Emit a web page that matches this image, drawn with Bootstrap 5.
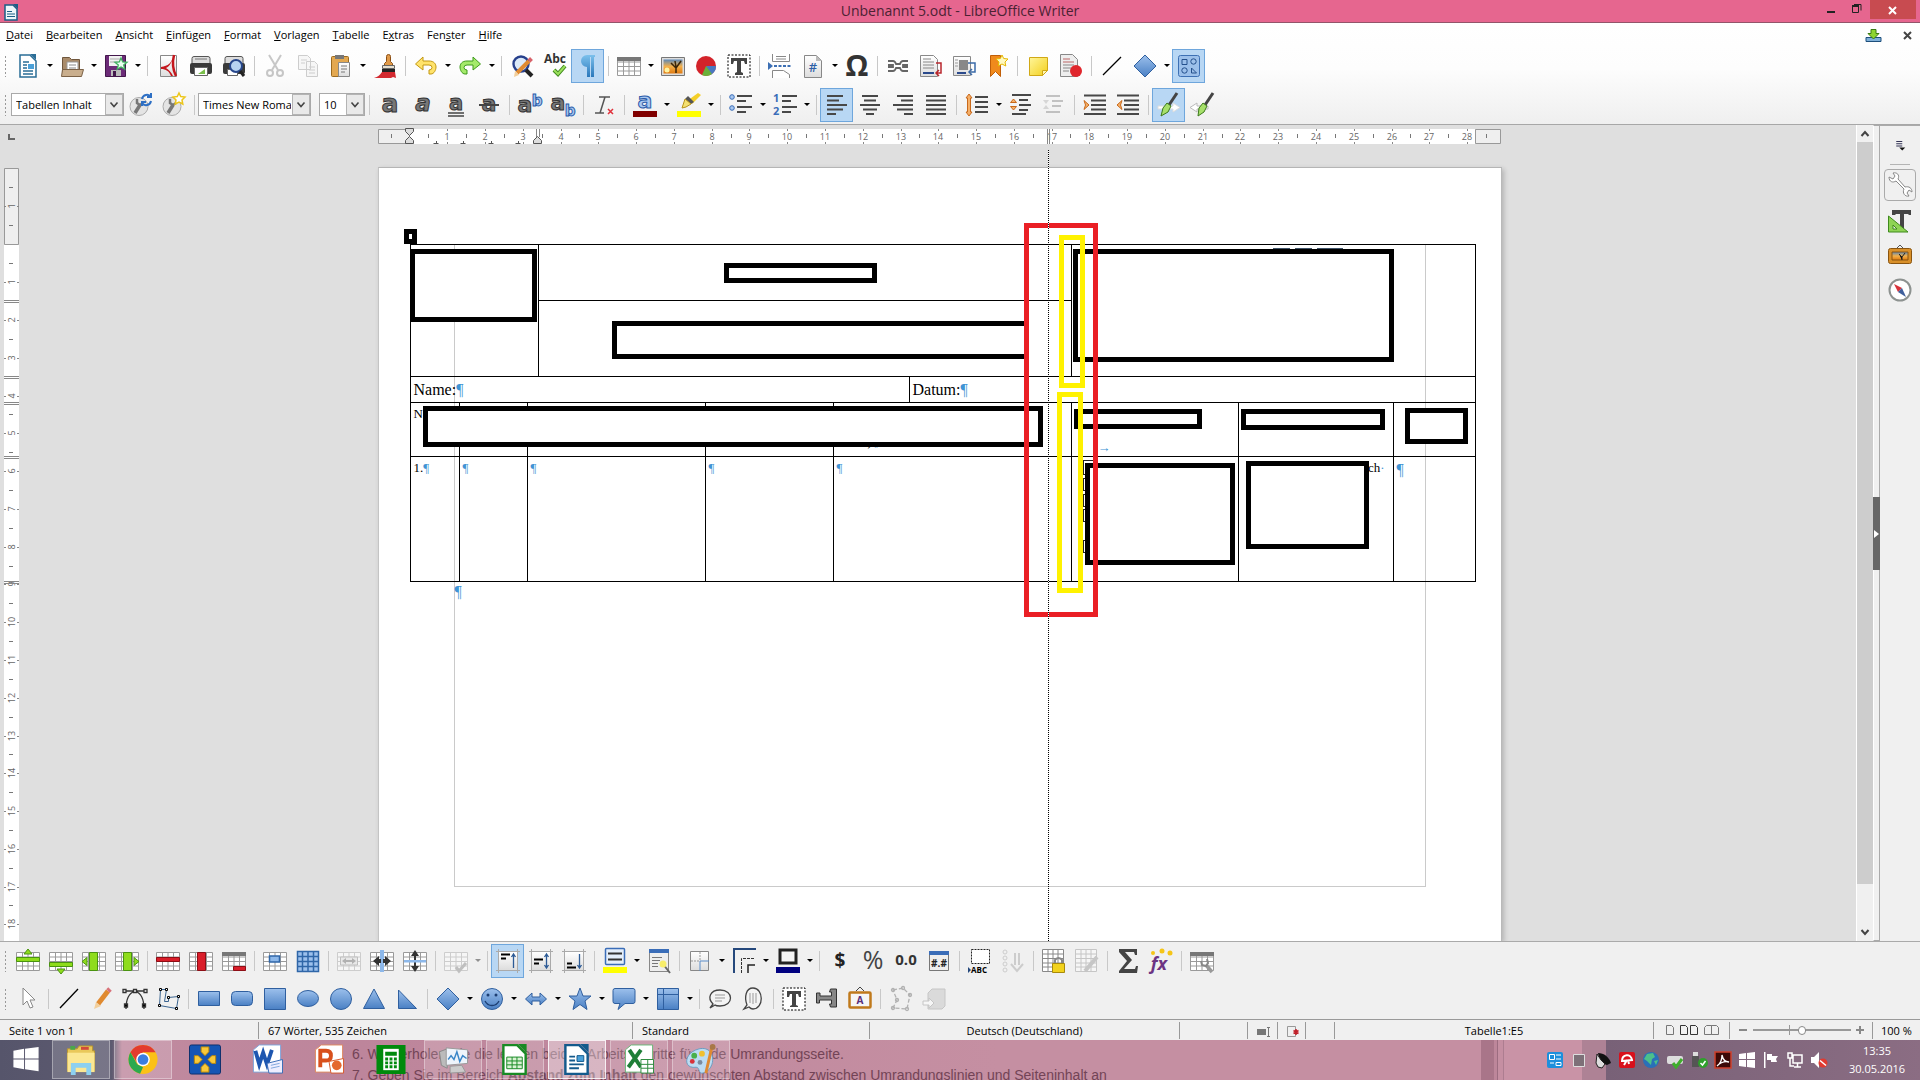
<!DOCTYPE html>
<html lang="de">
<head>
<meta charset="utf-8">
<meta name="viewport" content="width=device-width, initial-scale=1">
<title>Unbenannt 5.odt - LibreOffice Writer</title>
<link href="https://cdn.jsdelivr.net/npm/bootstrap@5.3.0/dist/css/bootstrap.min.css" rel="stylesheet">
<style>
:root{--ui:"Open Sans","Noto Sans",sans-serif}
body{font:11px/16px var(--ui);color:#000;background:#dfdfdf;overflow:hidden}
button,select{font:inherit;color:inherit}
button{background:none;border:0;padding:0}
.titlebar{height:23px;background:#e6668f;border-bottom:1px solid #93556a;color:#4b2233}
.titlebar h1{font-size:14px;line-height:22px}
.win-b{width:26px;height:19px}
.win-x{width:46px;height:19px;background:#c84b50}
.chrome-top{height:102px;background:linear-gradient(#fff 0,#fdfdfd 45%,#efefef 100%);border-bottom:1px solid #a7a7a7}
.menubar{height:23px;padding-left:6px;gap:13px}
.menubar a{color:#000;text-decoration:none}
.menubar u{text-underline-offset:1px}
.toolrow{height:39px;padding-left:4px}
.grip{width:7px;height:22px;background:radial-gradient(circle,#999 1px,transparent 1px) 0 0/3px 4px;background-repeat:repeat-y;flex:none}
.tb{width:33px;height:34px;flex:none;display:flex;align-items:center;justify-content:center;border:1px solid transparent}
.tb.on{background:#b8d7f4;border-color:#6ea6dc}
.tb svg{width:24px;height:26px;overflow:visible}
.tb.off{opacity:.4}
.dd{width:11px;height:34px;flex:none;display:flex;align-items:center;justify-content:center}
.dd::after{content:"";border:3px solid transparent;border-top-color:#000;border-bottom:0}
.dd.off{opacity:.4}
.vr-t{width:8px;height:20px;flex:none;background:linear-gradient(#c8c8c8,#c8c8c8) center/1px 100% no-repeat}
.combo{appearance:none;height:23px;border:1px solid #a9a9a9;border-radius:0;padding:0 19px 0 4px;background:#fff url("data:image/svg+xml,%3Csvg xmlns='http://www.w3.org/2000/svg' width='18' height='21'%3E%3Crect x='.5' y='.5' width='17' height='20' fill='%23e9e9e9' stroke='%23b4b4b4'/%3E%3Cpath d='M5.500 8.500 9 12.500 12.500 8.500' fill='none' stroke='%23444' stroke-width='1.600'/%3E%3C/svg%3E") right center no-repeat;flex:none;overflow:hidden}
.w-style{width:113px}.w-font{width:113px}.w-size{width:46px}
.work{min-height:0}
.leftcol{width:23px;flex:none}
.sheet-w{width:1124px;margin:0 auto;flex:none}
.hr-row{height:42px}
.sheet{background:#fff;position:relative;height:100%;border-top:1px solid #b5b5b5;border-left:1px solid #c4c4c4;border-right:1px solid #b9b9b9;box-shadow:2px 2px 5px rgba(0,0,0,.2)}
.frame-guide{position:absolute;left:75px;top:76px;width:972px;height:643px;border:1px solid #cacaca;border-top:0}
.doc{position:relative;table-layout:fixed;width:1066px;margin:76px 0 0 31px;border-collapse:collapse;font-family:"Liberation Serif",serif;font-size:13px;line-height:15px}
.doc td{border:1px solid #000;padding:3px;vertical-align:top;overflow:hidden}
.doc .head-c{font-size:16px;line-height:19px}
.pil{color:#3f94d4}
.pil-end{font:16px/19px "Liberation Serif",serif;padding-left:76px}
.r1{height:56px}.r2{height:76px}.r3{height:26px}.r4{height:54px}.r5{height:125px}
.doc .low{padding:31px 3px 0}
.doc .tabm{padding:37px 0 0 26px}
.hide-box{position:absolute;border:5px solid #000;background:#fff}
.open-r{border-right:0}
.red-box{position:absolute;border:5px solid #ea1f25}
.yel-box{position:absolute;border:5px solid #fff200}
.logo-bit{position:absolute;background:#3d5166}
.tick{position:absolute;border:1px solid #222}
.drag-line{position:absolute;left:669px;top:-18px;bottom:0;width:1px;background:repeating-linear-gradient(#000 0 1px,#fff 1px 2px)}
.sbar{width:17px;flex:none;background:#f0f0f0;border-left:1px solid #fff}
.sb-thumb{background:#cdcdcd;flex:742 0 0}
.sb-rest{flex:40 0 0}
.splitter{width:7px;flex:none;background:#f0f0f0;border:1px solid #aaa;border-left-color:#fff;position:relative}
.split-h{position:absolute;left:-1px;top:371px;width:7px;height:73px;background:#666}
.sidebar-r{width:40px;flex:none;background:#f0f0f0;border-top:1px solid #aaa}
.sidebar-r .tb{height:34px}
.sidebar-r .tb.small-ic svg{width:18px;height:20px}
.sidebar-r .tb.sel{border:1px solid #aaa;border-radius:4px;height:32px;width:32px}
.chrome-bot{height:78px;background:#f0f0f0;border-top:1px solid #aaa}
.chrome-bot .toolrow:first-child{height:37px}
.status{height:21px;background:#f0f0f0;border-top:1px solid #999}
.status>div{height:17px;border-right:1px solid #999;padding-left:9px;line-height:17px;flex:none;white-space:nowrap}
.zoomr{appearance:none;width:98px;height:14px;background:linear-gradient(#999,#999) center/100% 2px no-repeat,linear-gradient(#999,#999) 36px center/1px 10px no-repeat}
.zoomr::-webkit-slider-thumb{appearance:none;width:8px;height:9px;border-radius:4px;border:1px solid #888;background:#fff}
.task{height:40px;background:linear-gradient(90deg,#56556b 0,#5d5a70 112px,#c08a9f 122px,#bd859b 360px,#c58fa2 1000px);position:relative}
.ghost{position:absolute;left:352px;top:4px;font:14px/21px "Liberation Sans",sans-serif;color:#6b3c4f;white-space:nowrap;opacity:.9}
.tk{width:58px;height:39px;flex:none;display:flex;align-items:center;justify-content:center;border:1px solid transparent;margin-right:4px;position:relative}
.tk.open{background:rgba(255,255,255,.17);border-color:rgba(255,255,255,.35)}
.tk.act{background:rgba(255,255,255,.38);border-color:rgba(255,255,255,.8)}
.tk svg{width:34px;height:31px}
.tk-start{width:52px;margin-right:0}
.stripes{position:absolute;left:1481px;right:0;top:0;height:40px;background:linear-gradient(90deg,#a97589 0 13px,#bd869a 13px 16px,#9c6c80 16px 17px,#c58fa2 17px 22px,#ad7d90 22px 23px,#c993a6 23px 101px,#ae8295 101px 125px,#786177 125px,#8b6d83 100%)}
.tray{gap:6px;z-index:1}
.tray svg{width:18px;height:18px}
.clock{width:86px;font-size:11px;line-height:18px}
svg text{font-family:var(--ui)}
svg .gl{font-family:"DejaVu Sans",sans-serif;font-weight:700;fill:#777;stroke:#333;stroke-width:1px}
svg .gl.bl{fill:#a9c8f0;stroke:#2a5caa}
</style>
</head>
<body class="d-flex flex-column vh-100">
<svg width="0" height="0" class="position-absolute" aria-hidden="true">
<defs>
<linearGradient id="gb" x2="0" y2="1"><stop stop-color="#9cc0ec"/><stop offset="1" stop-color="#4a80c4"/></linearGradient>
<linearGradient id="gy" x2="1" y2="1"><stop stop-color="#fff69a"/><stop offset="1" stop-color="#f3cf1c"/></linearGradient>
<linearGradient id="gp" x2="0" y2="1"><stop stop-color="#fff"/><stop offset="1" stop-color="#ddd"/></linearGradient>
<linearGradient id="gs" x2="0" y2="1"><stop stop-color="#5b88b8"/><stop offset=".5" stop-color="#f3b04a"/><stop offset="1" stop-color="#e07a10"/></linearGradient>
<linearGradient id="gd" x2="0" y2="1"><stop stop-color="#7cc0ec"/><stop offset="1" stop-color="#2a78bc"/></linearGradient>
<symbol id="grid" viewBox="0 0 24 24"><path fill="#fff" stroke="#9a9a9a" d="M.5 3.500h23v18H.5zM.5 8h23M.5 12.500h23M.5 17h23M6.500 3.500v18M12 3.500v18M17.500 3.500v18"/></symbol>
<symbol id="page" viewBox="0 0 24 24"><path fill="url(#gp)" stroke="#888" d="M3.500 1.500h12l5 5v17h-17z"/><path fill="#bbb" d="M15 1l6 6h-6z"/></symbol>
</defs></svg>

<header class="titlebar d-flex align-items-start position-relative">
  <svg class="ms-1 mt-1 me-auto" width="14" height="17" viewBox="0 0 14 17"><path fill="#eef6fa" stroke="#1b5e86" stroke-width="1.500" d="M1 1h8l4 4v11H1z"/><path fill="#1b5e86" d="M9 0h5v5z"/><path stroke="#1b5e86" d="M3 7.500h5M3 10h8M3 12.500h8"/></svg>
  <h1 class="position-absolute start-0 end-0 text-center m-0 fw-normal pe-none">Unbenannt 5.odt - LibreOffice Writer</h1>
  <div class="d-flex">
    <button aria-label="Minimieren" class="win-b"><svg width="12" height="19"><path fill="#222" d="M2 11h8v2H2z"/></svg></button>
    <button aria-label="Wiederherstellen" class="win-b"><svg width="12" height="19"><path fill="none" stroke="#222" d="M1.500 6.500h6v6h-6zM3 4.500h7v6"/><path fill="#222" d="M1 5h7v2H1z"/></svg></button>
    <button aria-label="Schließen" class="win-x me-1"><svg width="12" height="12" viewBox="0 0 12 12"><path stroke="#fff" stroke-width="2" d="M2 2l7 7M9 2l-7 7"/></svg></button>
  </div>
</header>

<div class="chrome-top">
  <nav class="menubar d-flex align-items-center">
    <a href="#"><u>D</u>atei</a><a href="#"><u>B</u>earbeiten</a><a href="#"><u>A</u>nsicht</a><a href="#"><u>E</u>infügen</a><a href="#"><u>F</u>ormat</a><a href="#"><u>V</u>orlagen</a><a href="#"><u>T</u>abelle</a><a href="#">E<u>x</u>tras</a><a href="#">Fen<u>s</u>ter</a><a href="#"><u>H</u>ilfe</a>
    <button aria-label="Aktualisieren" class="ms-auto me-2"><svg width="17" height="14" viewBox="0 0 17 14"><path fill="#7fb0d8" stroke="#1d4f7c" d="M1 8.500h15v4H1z"/><path fill="#8ed531" stroke="#3a7a12" d="M6 .5h5v4h3L8.500 10 3 4.500h3z"/></svg></button>
    <button aria-label="Dokument schließen" class="me-2"><svg width="9" height="9"><path stroke="#444" stroke-width="2" d="M1 1l7 7M8 1L1 8"/></svg></button>
  </nav>
  <div class="toolrow d-flex align-items-center" role="toolbar" aria-label="Standard">
    <span class="grip"></span>
    <button class="tb" aria-label="Neu"><svg viewBox="0 0 24 24"><path fill="#fff" stroke="#2a6d96" stroke-width="1.500" d="M4 1h10l6 6v16H4z"/><path fill="#2a6d96" d="M14 0h6v6z"/><path stroke="#2a6d96" stroke-width="1.500" d="M7 8h6M7 11h4M7 14h4M7 17h10M7 20h10"/><path fill="#4aa0d8" d="M12 10h6v5h-6z"/></svg></button><button class="dd" aria-label="Neu Auswahl"></button>
    <button class="tb" aria-label="Öffnen"><svg viewBox="0 0 24 24"><path fill="#a98b6a" stroke="#6f563c" d="M2.500 21V3.500h7l2 2h8V21z"/><path fill="#fff" stroke="#999" d="M7 8h11v9H7z"/><path stroke="#888" d="M9 11h7M9 14h7"/><path fill="#c9ae8d" stroke="#7b6146" d="M1.500 22.500l1-7h21l-2 7z"/></svg></button><button class="dd" aria-label="Öffnen Auswahl"></button>
    <button class="tb" aria-label="Speichern"><svg viewBox="0 0 24 24"><path fill="#6c2b78" stroke="#43184c" d="M1.500 1.500h20v21h-20z"/><path fill="#f2f2f2" d="M5 2h13v10H5z"/><path stroke="#aaa" d="M6 5h11M6 8h11"/><path fill="#bbb" d="M7 16h10v6H7z"/><path fill="#43184c" d="M9 17h3v5H9z"/><path fill="#e9ffef" stroke="#40b060" stroke-width="1.300" d="M17 4l1.700 4 4.300.3-3.300 2.700 1.100 4.200L17 13l-3.800 2.200 1.100-4.200L11 8.300l4.300-.3z"/></svg></button><button class="dd" aria-label="Speichern Auswahl"></button>
    <span class="vr-t"></span>
    <button class="tb" aria-label="Als PDF exportieren"><svg viewBox="0 0 24 24"><path fill="url(#gp)" stroke="#888" d="M4.500 1.500h16v21h-16z"/><path fill="none" stroke="#c4161c" stroke-width="2.500" d="M18 1c-2 8-1 15 2 21"/><path fill="#c4161c" d="M17 2c-1 7-5 10-12 11v2c5 0 8 2 10 7h2c-2-4-4-6-7-8 4-2 6-6 7-12z"/></svg></button>
    <button class="tb" aria-label="Drucken"><svg viewBox="0 0 24 24"><rect x="3" y="2.500" width="18" height="9" rx="2" fill="#ddd" stroke="#555"/><path stroke="#777" d="M6 5h12"/><rect x="1" y="9" width="22" height="11" rx="2" fill="#3a3a3a"/><path fill="#fff" stroke="#666" d="M5.500 13.500h13v8h-13z"/><path fill="#7ac04a" d="M9 20l7-5v5z"/></svg></button>
    <button class="tb" aria-label="Druckvorschau"><svg viewBox="0 0 24 24"><rect x="3" y="2.500" width="18" height="9" rx="2" fill="#ddd" stroke="#555"/><rect x="1" y="9" width="22" height="11" rx="2" fill="#3a3a3a"/><path fill="#fff" stroke="#666" d="M5.500 15.500h10v6h-10z"/><circle cx="14" cy="12" r="6" fill="#b8d4f2" stroke="#27478c" stroke-width="2"/><path stroke="#222" stroke-width="3" d="M18 17l4 5"/></svg></button>
    <span class="vr-t"></span>
    <button class="tb off" aria-label="Ausschneiden"><svg viewBox="0 0 24 24" fill="none" stroke="#777" stroke-width="2"><path d="M6 1l9 15M18 1L9 16"/><circle cx="7" cy="19" r="3"/><circle cx="17" cy="19" r="3"/></svg></button>
    <button class="tb off" aria-label="Kopieren"><svg viewBox="0 0 24 24"><path fill="#eee" stroke="#888" d="M2.500 1.500h9l3 3v11h-12zM10.500 7.500h8l3 3v12h-11z"/><path stroke="#888" d="M5 6h6M5 9h4M13 13h6M13 16h6M13 19h6"/></svg></button>
    <button class="tb" aria-label="Einfügen"><svg viewBox="0 0 24 24"><rect x="2.500" y="2.500" width="17" height="20" rx="1" fill="#e3a850" stroke="#9b6a1f"/><rect x="6" y="1" width="9" height="4" fill="#777"/><path fill="url(#gp)" stroke="#888" d="M9.500 8.500h11v14h-11z"/><path stroke="#777" d="M12 12h6M12 15h6M12 18h4"/></svg></button><button class="dd" aria-label="Einfügen Auswahl"></button>
    <button class="tb" aria-label="Format übertragen"><svg viewBox="0 0 24 24"><path fill="#e09a4a" stroke="#8c4f14" d="M13.500 2.500q0-2 2-2t2 2v5l2 2v2h-8v-2l2-2z"/><path fill="#e8e0d0" stroke="#666" d="M9.500 11.500h12v3h-12z"/><path fill="#222" d="M9 15h13v4H9z"/><path fill="#d42a30" d="M9 18h13l1 6-3-1-2 1H1c4-1 6-3 8-6z"/></svg></button>
    <span class="vr-t"></span>
    <button class="tb" aria-label="Rückgängig"><svg viewBox="0 0 24 24"><path fill="#ffe36b" stroke="#c39812" stroke-linejoin="round" d="M1.500 10L9 3v4h6c5 0 7 3 7 6s-2 7-5 7h-2v-4q3 0 3-2.500T15 11H9v5z"/></svg></button><button class="dd" aria-label="Rückgängig Auswahl"></button>
    <button class="tb" aria-label="Wiederherstellen"><svg viewBox="0 0 24 24"><path fill="#a4ea6a" stroke="#3f9a1c" stroke-linejoin="round" d="M22.500 10L15 3v4H9c-5 0-7 3-7 6s2 7 5 7h2v-4q-3 0-3-2.500T9 11h6v5z"/></svg></button><button class="dd" aria-label="Wiederherstellen Auswahl"></button>
    <span class="vr-t"></span>
    <button class="tb" aria-label="Suchen und Ersetzen"><svg viewBox="0 0 24 24"><circle cx="11" cy="10" r="7.500" fill="#dbe9f8" stroke="#27408c" stroke-width="2.400"/><path stroke="#222" stroke-width="4" d="M16 16l6 6"/><path stroke="#e08a30" stroke-width="4" d="M19 7L7 19"/><path fill="#f2cf9c" d="M5 17l4 4-5 2z"/><path stroke="#d8626a" stroke-width="4" d="M21.500 4.500L19 7"/></svg></button>
    <button class="tb" aria-label="Rechtschreibung"><svg viewBox="0 0 24 24"><text x="12" y="9" text-anchor="middle" font-size="12" font-weight="700" fill="#333">Abc</text><path fill="none" stroke="#3f8a1c" stroke-width="4" d="M11 16l4 4 7-8"/><path fill="none" stroke="#9be05c" stroke-width="2" d="M11 16l4 4 7-8"/></svg></button>
    <button class="tb on" aria-label="Formatierungszeichen"><svg viewBox="0 0 24 24"><path fill="url(#gd)" d="M11 1h8v2h-1v20h-3V3h-1v20h-3V13a6 6 0 0 1 0-12z"/></svg></button>
    <span class="vr-t"></span>
    <button class="tb" aria-label="Tabelle"><svg viewBox="0 0 24 24"><use href="#grid"/><path fill="#777" d="M0 3h24v4H0z"/></svg></button><button class="dd" aria-label="Tabelle Auswahl"></button>
    <button class="tb" aria-label="Bild"><svg viewBox="0 0 24 24"><path fill="#ddd" stroke="#777" d="M.5 3.500h23v18H.5z"/><path fill="url(#gs)" d="M2.500 5.500h19v14h-19z"/><path fill="none" stroke="#3a2608" stroke-width="1.500" d="M15 19v-5l-5-5M15 14l5-7M15 13l-1-6"/><circle cx="6" cy="16" r="2.500" fill="#fff3a0"/></svg></button>
    <button class="tb" aria-label="Diagramm"><svg viewBox="0 0 24 24"><circle cx="12" cy="12" r="10" fill="#d3232a"/><path fill="#4a78c0" d="M12 12h10a10 10 0 0 1-5 8.700z"/><path fill="#6bb03a" d="M12 12l6 8a10 10 0 0 1-10 1z"/></svg></button>
    <button class="tb" aria-label="Textfeld"><svg viewBox="0 0 24 24"><path fill="#fff" stroke="#000" stroke-dasharray="2 1.500" d="M1 1h22v22H1z"/><path fill="#444" d="M4 4h16v6h-2l-1-3h-3v11l2 1v2H8v-2l2-1V7H7l-1 3H4z"/></svg></button>
    <span class="vr-t"></span>
    <button class="tb" aria-label="Seitenumbruch"><svg viewBox="0 0 24 24"><path fill="#fff" stroke="#888" d="M4.500 0v7.500h17V0M4.500 24v-7.500h11l6 4V24M8 2.500h10M8 5h10"/><path fill="#3c6fb4" d="M0 8l5 4-5 4z"/><path stroke="#3c6fb4" stroke-width="2" stroke-dasharray="3 1.500" d="M6 12h18"/></svg></button>
    <button class="tb" aria-label="Feldbefehl"><svg viewBox="0 0 24 24"><use href="#page"/><text x="12" y="18" text-anchor="middle" font-size="13" font-weight="600" fill="#2d5fa6">#</text></svg></button><button class="dd" aria-label="Feldbefehl Auswahl"></button>
    <button class="tb" aria-label="Sonderzeichen"><svg viewBox="0 0 24 24"><text x="12" y="22" text-anchor="middle" font-size="29" font-weight="700" fill="#333">Ω</text></svg></button>
    <span class="vr-t"></span>
    <button class="tb" aria-label="Hyperlink"><svg viewBox="0 0 24 24" fill="none" stroke="#666" stroke-width="1.800"><path d="M2 7h5q2 0 3 3h4q1-3 3-3h5M2 17h5q2 0 3-3h4q1 3 3 3h5M2 11h5v2H2M22 11h-5v2h5"/></svg></button>
    <button class="tb" aria-label="Fußnote"><svg viewBox="0 0 24 24"><path fill="url(#gp)" stroke="#888" d="M1.500 1.500h13l4 4v17h-17z"/><path stroke="#888" d="M4 5h8M4 8h11M4 11h11M4 14h11"/><path stroke="#2b4a8c" stroke-width="2" d="M4 19h11"/><path fill="none" stroke="#b8262c" stroke-width="1.500" d="M17 9h5v10h-4M20 16l-3 3 3 3"/></svg></button>
    <button class="tb" aria-label="Endnote"><svg viewBox="0 0 24 24"><path fill="url(#gp)" stroke="#888" d="M1.500 2.500h17v19h-17z"/><path fill="#888" d="M7 6h9v10H7z"/><path stroke="#999" d="M3 6h3M3 9h3M3 12h3"/><path stroke="#2b4a8c" stroke-width="2" d="M5 19h9"/><path fill="none" stroke="#3a6aa8" stroke-width="1.500" d="M16 9h7v9h-4M20 15l-3 3 3 3"/></svg></button>
    <button class="tb" aria-label="Lesezeichen"><svg viewBox="0 0 24 24"><path fill="#f08a1c" stroke="#c05e08" d="M5.500 1.500h10v21l-5-5-5 5z"/><path fill="#fff8c0" stroke="#e6b800" d="M17 1l1.700 3.500 4.300.5-3 3 .8 4L17 10l-3.800 2 .8-4-3-3 4.300-.5z"/></svg></button>
    <span class="vr-t"></span>
    <button class="tb" aria-label="Kommentar"><svg viewBox="0 0 24 24"><path fill="url(#gy)" stroke="#d0a816" d="M3.500 3.500h18v13l-5 5h-13z"/><path fill="#fff7b5" stroke="#d0a816" d="M21.500 16.500h-5v5z"/></svg></button>
    <button class="tb" aria-label="Änderungen verfolgen"><svg viewBox="0 0 24 24"><path fill="#eee" stroke="#888" d="M1.500 .5h12l5 5v17h-17z"/><path stroke="#b66" d="M4 5h7M4 8h11"/><path stroke="#888" d="M4 11h11M4 14h8M4 17h6"/><circle cx="17" cy="17" r="6" fill="#e0262c"/></svg></button>
    <span class="vr-t"></span>
    <button class="tb" aria-label="Linie"><svg viewBox="0 0 24 24"><path stroke="#000" stroke-width="1.300" d="M3 21L21 3"/></svg></button>
    <button class="tb" aria-label="Standardformen"><svg viewBox="0 0 24 24"><path fill="url(#gb)" stroke="#2f5f9f" d="M12 1l11 11-11 11L1 12z"/></svg></button><button class="dd" aria-label="Standardformen Auswahl"></button>
    <button class="tb on" aria-label="Zeichenfunktionen"><svg viewBox="0 0 24 24"><rect x="1.500" y="1.500" width="21" height="21" rx="2" fill="#9cc0ea" stroke="#3d70b4"/><path fill="none" stroke="#24508c" d="M5 5.500h5v5H5zM14.500 14v5h5z"/><circle cx="16.500" cy="7.500" r="2.700" fill="none" stroke="#24508c"/><circle cx="7.500" cy="16.500" r="2.700" fill="none" stroke="#24508c"/></svg></button>
  </div>
  <div class="toolrow d-flex align-items-center" role="toolbar" aria-label="Formatierung">
    <span class="grip"></span>
    <select class="combo w-style" aria-label="Absatzvorlage"><option>Tabellen Inhalt</option></select>
    <button class="tb" aria-label="Vorlage aktualisieren"><svg viewBox="0 0 24 24"><circle cx="10" cy="13.500" r="9" fill="#e4e4e4" stroke="#aaa"/><path stroke="#777" stroke-width="3.500" d="M6 20l5-8"/><path fill="none" stroke="#777" stroke-width="2.500" d="M8 6v4l3 2 3-2"/><path fill="none" stroke="#2d6fc4" stroke-width="2" d="M13 6a5 5 0 0 1 9-2M22 8a5 5 0 0 1-9 2M22 0v4h-4M13 13v-4h4"/></svg></button>
    <button class="tb" aria-label="Neue Vorlage"><svg viewBox="0 0 24 24"><circle cx="10" cy="13.500" r="9" fill="#e4e4e4" stroke="#aaa"/><path stroke="#777" stroke-width="3.500" d="M6 20l5-8"/><path fill="none" stroke="#777" stroke-width="2.500" d="M8 6v4l3 2 3-2"/><path fill="#fff" stroke="#ecc61c" stroke-width="1.500" d="M17 0l1.700 3.500 4.300.5-3 3 .8 4L17 9l-3.800 2 .8-4-3-3 4.300-.5z"/></svg></button>
    <span class="vr-t"></span>
    <select class="combo w-font" aria-label="Schriftname"><option>Times New Roman</option></select>
    <select class="combo w-size ms-2" aria-label="Schriftgröße"><option>10</option></select>
    <span class="vr-t"></span>
    <button class="tb" aria-label="Fett"><svg viewBox="0 0 24 24"><text class="gl" x="12" y="19" text-anchor="middle" font-size="25">a</text></svg></button>
    <button class="tb" aria-label="Kursiv"><svg viewBox="0 0 24 24"><text class="gl" x="12" y="18" text-anchor="middle" font-size="23" font-style="italic">a</text></svg></button>
    <button class="tb" aria-label="Unterstrichen"><svg viewBox="0 0 24 24"><text class="gl" x="12" y="17" text-anchor="middle" font-size="21">a</text><path stroke="#444" stroke-width="1.500" d="M4 20h16M4 23h16"/></svg></button>
    <button class="tb" aria-label="Durchgestrichen"><svg viewBox="0 0 24 24"><text class="gl" x="12" y="18" text-anchor="middle" font-size="22">a</text><path stroke="#444" stroke-width="2" d="M2 12h20"/></svg></button>
    <span class="vr-t"></span>
    <button class="tb" aria-label="Hochgestellt"><svg viewBox="0 0 24 24"><text class="gl" x="7" y="19" text-anchor="middle" font-size="22">a</text><text class="gl bl" x="19" y="13" text-anchor="middle" font-size="15">b</text></svg></button>
    <button class="tb" aria-label="Tiefgestellt"><svg viewBox="0 0 24 24"><text class="gl" x="7" y="17" text-anchor="middle" font-size="22">a</text><text class="gl bl" x="19" y="23" text-anchor="middle" font-size="15">b</text></svg></button>
    <span class="vr-t"></span>
    <button class="tb" aria-label="Direkte Formatierung löschen"><svg viewBox="0 0 24 24"><path fill="none" stroke="#555" stroke-width="1.500" d="M7 4h11M13 4L8 20M3 20h9"/><path stroke="#e0303a" stroke-width="1.500" d="M16 16l5 5M21 16l-5 5"/></svg></button>
    <span class="vr-t"></span>
    <button class="tb" aria-label="Schriftfarbe"><svg viewBox="0 0 24 24"><text class="gl bl" x="12" y="15" text-anchor="middle" font-size="22">a</text><path fill="#800000" d="M0 18h24v6H0z"/></svg></button><button class="dd" aria-label="Schriftfarbe Auswahl"></button>
    <button class="tb" aria-label="Zeichenhintergrund"><svg viewBox="0 0 24 24"><path fill="#f4cf28" d="M21 0l3 2-9 9-5-3z"/><path fill="#555" d="M11 3l6 6-3 2-6-5z"/><path fill="#f4e070" stroke="#b8941a" d="M8 6l6 5-5 3-4 1z"/><path fill="#ff0" d="M0 18h24v6H0z"/></svg></button><button class="dd" aria-label="Zeichenhintergrund Auswahl"></button>
    <span class="vr-t"></span>
    <button class="tb" aria-label="Aufzählung"><svg viewBox="0 0 24 24"><circle cx="3" cy="4" r="2.300" fill="#a9c8f0" stroke="#3a6db8"/><circle cx="3" cy="15" r="2.300" fill="#a9c8f0" stroke="#3a6db8"/><path stroke="#484848" stroke-width="2.200" d="M8 3h15M8 8h9M8 14h15M8 19h9"/></svg></button><button class="dd" aria-label="Aufzählung Auswahl"></button>
    <button class="tb" aria-label="Nummerierung"><svg viewBox="0 0 24 24"><text x="0" y="9" font-size="11" font-weight="700" fill="#3a6db8">1</text><text x="0" y="22" font-size="11" font-weight="700" fill="#3a6db8">2</text><path stroke="#484848" stroke-width="2.200" d="M9 3h15M9 8h9M9 14h15M9 19h9"/></svg></button><button class="dd" aria-label="Nummerierung Auswahl"></button>
    <span class="vr-t"></span>
    <button class="tb on" aria-label="Linksbündig"><svg viewBox="0 0 24 24"><path stroke="#484848" stroke-width="2.200" d="M2 3h16M2 7.500h12M2 12h20M2 16.500h16M2 21h9"/></svg></button>
    <button class="tb" aria-label="Zentriert"><svg viewBox="0 0 24 24"><path stroke="#484848" stroke-width="2.200" d="M4 3h16M6 7.500h12M2 12h20M5 16.500h14M8 21h8"/></svg></button>
    <button class="tb" aria-label="Rechtsbündig"><svg viewBox="0 0 24 24"><path stroke="#484848" stroke-width="2.200" d="M6 3h16M10 7.500h12M2 12h20M6 16.500h16M13 21h9"/></svg></button>
    <button class="tb" aria-label="Blocksatz"><svg viewBox="0 0 24 24"><path stroke="#484848" stroke-width="2.200" d="M2 3h20M2 7.500h20M2 12h20M2 16.500h20M2 21h20"/></svg></button>
    <span class="vr-t"></span>
    <button class="tb" aria-label="Zeilenabstand"><svg viewBox="0 0 24 24"><path fill="#f6b068" stroke="#c8691c" d="M4 1l3 4H5.500v14H7l-3 4-3-4h1.500V5H1z"/><path stroke="#484848" stroke-width="2.200" d="M10 4h13M10 9h13M10 14h13M10 19h13"/></svg></button><button class="dd" aria-label="Zeilenabstand Auswahl"></button>
    <button class="tb" aria-label="Absatzabstand vergrößern"><svg viewBox="0 0 24 24"><path stroke="#484848" stroke-width="2.200" d="M3 2h19M10 7h9M10 12h12M10 17h9M3 21h14"/><path fill="#f6b068" stroke="#c8691c" d="M4.500 6l3 3.500h-6zM4.500 17l3-3.500h-6z"/></svg></button>
    <button class="tb off" aria-label="Absatzabstand verkleinern"><svg viewBox="0 0 24 24"><path stroke="#777" stroke-width="2.200" d="M4 3h14M10 8h11M10 13h9M4 19h14"/><path fill="#aaa" d="M1 7h6L4 11zM1 16h6l-3-4z"/></svg></button>
    <span class="vr-t"></span>
    <button class="tb" aria-label="Einzug vergrößern"><svg viewBox="0 0 24 24"><path stroke="#484848" stroke-width="2.200" d="M1 2.500h22M8 7.500h15M8 12h15M8 16.500h15M1 21h22"/><path fill="#f6b068" stroke="#c8691c" d="M1 7.500l5 4.500-5 4.500 1.500-4.500z"/></svg></button>
    <button class="tb" aria-label="Einzug verkleinern"><svg viewBox="0 0 24 24"><path stroke="#484848" stroke-width="2.200" d="M1 2.500h22M8 7.500h15M8 12h15M8 16.500h15M1 21h22"/><path fill="#f6b068" stroke="#c8691c" d="M6 7.500L1 12l5 4.500L4.500 12z"/></svg></button>
    <span class="vr-t"></span>
    <button class="tb on" aria-label="Von links nach rechts"><svg viewBox="0 0 24 24"><path fill="#fff" stroke="#ddd" d="M1 13h15v-3l7 4.500-7 4.500v-3H1z"/><path stroke="#444" stroke-width="3" d="M20 0l-8 12"/><path fill="#a7e06a" stroke="#3c7a1c" d="M10 10l4 3-3 6-7 4 2-8z"/></svg></button>
    <button class="tb" aria-label="Von rechts nach links"><svg viewBox="0 0 24 24"><path fill="#fff" stroke="#bbb" d="M18 13H7v-3l-7 4.500L7 19v-3h11z"/><path stroke="#444" stroke-width="3" d="M23 0l-8 12"/><path fill="#a7e06a" stroke="#3c7a1c" d="M13 10l4 3-3 6-6 4 1-8z"/></svg></button>
  </div>
</div>

<main class="work d-flex flex-grow-1">
  <div class="leftcol">
    <svg id="vruler" width="23" height="816" class="d-block"></svg>
  </div>
  <section class="flex-grow-1 d-flex flex-column overflow-hidden">
    <div class="hr-row d-flex flex-shrink-0"><svg id="hruler" class="sheet-w" height="42"></svg></div>
    <div class="sheet-w flex-grow-1">
      <article class="sheet">
        <div class="frame-guide"></div>
        <table class="doc">
          <colgroup><col width="49"><col width="68"><col width="11"><col width="167"><col width="128"><col width="76"><col width="162"><col width="167"><col width="155"><col width="82"></colgroup>
          <tr class="r1"><td colspan="3" rowspan="2"></td><td colspan="4"></td><td colspan="3" rowspan="2"></td></tr>
          <tr class="r2"><td colspan="4"></td></tr>
          <tr class="r3 head-c"><td colspan="6">Name:<span class="pil">¶</span></td><td colspan="4">Datum:<span class="pil">¶</span></td></tr>
          <tr class="r4"><td>Nr.</td><td></td><td colspan="2"></td><td></td><td colspan="2" class="low">Email)<span class="pil">¶</span></td><td class="tabm"><span class="pil">→</span></td><td></td><td></td></tr>
          <tr class="r5"><td>1.<span class="pil">¶</span></td><td><span class="pil">¶</span></td><td colspan="2"><span class="pil">¶</span></td><td><span class="pil">¶</span></td><td colspan="2"><span class="pil">¶</span></td><td></td><td class="text-end pe-2">ch<span class="pil">·</span></td><td class="head-c"><span class="pil">¶</span></td></tr>
        </table>
        <p class="pil pil-end m-0 position-relative">¶</p>
        <div id="marks"></div>
      </article>
    </div>
  </section>
  <div class="sbar d-flex flex-column">
    <button aria-label="Nach oben" class="d-block"><svg width="16" height="17" class="d-block"><path fill="none" stroke="#444" stroke-width="2" d="M4.500 11L8 7l3.500 4"/></svg></button>
    <div class="sb-thumb"></div><div class="sb-rest"></div>
    <button aria-label="Nach unten" class="d-block"><svg width="16" height="17" class="d-block"><path fill="none" stroke="#444" stroke-width="2" d="M4.500 6L8 10l3.500-4"/></svg></button>
  </div>
  <div class="splitter"><button class="split-h" aria-label="Seitenleiste ausblenden"><svg width="7" height="10" class="d-block"><path fill="#fff" d="M1 1l5 4-5 4z"/></svg></button></div>
  <aside class="sidebar-r d-flex flex-column align-items-center">
    <button class="tb border-0 small-ic" aria-label="Einstellungen"><svg viewBox="0 0 24 24"><path stroke="#335" stroke-width="1.500" d="M7 10h8M7 13h8M7 16h8"/><path fill="#111" d="M11 18h8l-4 4z"/></svg></button>
    <hr class="m-0 mt-1 mb-1 w-50">
    <button class="tb sel" aria-label="Eigenschaften"><svg viewBox="0 0 24 24"><path fill="#fff" stroke="#888" d="M1 4c0 5 4 6 7 4l8 8c-2 4 1 8 5 7l-2-3 2-3 3 2c0-4-3-6-7-5l-7-8c2-4-1-7-5-6l2 3-2 3z"/></svg></button>
    <button class="tb mt-1 border-0" aria-label="Formatvorlagen"><svg viewBox="0 0 24 24"><path fill="#444" d="M4 0h19v5h-2l-1-1h-4v16h-4V4H8L7 5H4z"/><path fill="#8ed354" stroke="#3f8a1c" d="M.5 6v16H20zM5 15l4 4H5z"/></svg></button>
    <button class="tb border-0" aria-label="Galerie"><svg viewBox="0 0 24 24"><path fill="none" stroke="#555" d="M8 5l4-4 4 4"/><rect x=".5" y="4.500" width="23" height="15" rx="2" fill="#d9902a" stroke="#8a5510"/><path fill="url(#gs)" stroke="#8a5510" d="M4 8h16v8H4z"/><path stroke="#222" d="M14 16v-3l-3-3M14 13l3-4"/></svg></button>
    <button class="tb border-0" aria-label="Navigator"><svg viewBox="0 0 24 24"><circle cx="12" cy="12" r="10.500" fill="#fff" stroke="#8d9290" stroke-width="2"/><path fill="#d8323a" d="M6 6l8 4-4 4z"/><path fill="#3f5f9c" d="M18 19l-8-5 4-4z"/></svg></button>
  </aside>
</main>

<div class="chrome-bot">
  <div class="toolrow d-flex align-items-center" role="toolbar" aria-label="Tabelle">
    <span class="grip"></span>
    <button class="tb" aria-label="Zeile darüber"><svg viewBox="0 0 24 24"><use href="#grid"/><path fill="#8fdc1c" stroke="#4a9410" d="M.5 8.500h23v4H.5zM12 0l4 5H8z"/></svg></button>
    <button class="tb" aria-label="Zeile darunter"><svg viewBox="0 0 24 24"><use href="#grid"/><path fill="#8fdc1c" stroke="#4a9410" d="M.5 13.500h23v4H.5zM12 25l4-5H8z"/></svg></button>
    <button class="tb" aria-label="Spalte links"><svg viewBox="0 0 24 24"><use href="#grid"/><path fill="#8fdc1c" stroke="#4a9410" d="M7.500 3.500h8v18h-8zM0 12.500l5-4v8z"/></svg></button>
    <button class="tb" aria-label="Spalte rechts"><svg viewBox="0 0 24 24"><use href="#grid"/><path fill="#8fdc1c" stroke="#4a9410" d="M8.500 3.500h8v18h-8zM24 12.500l-5-4v8z"/></svg></button>
    <span class="vr-t"></span>
    <button class="tb" aria-label="Zeilen löschen"><svg viewBox="0 0 24 24"><use href="#grid"/><path fill="#d91e2a" stroke="#8e0e16" d="M.5 8.500h23v4H.5z"/></svg></button>
    <button class="tb" aria-label="Spalten löschen"><svg viewBox="0 0 24 24"><use href="#grid"/><path fill="#d91e2a" stroke="#8e0e16" d="M8.500 3.500h8v18h-8z"/></svg></button>
    <button class="tb" aria-label="Tabelle löschen"><svg viewBox="0 0 24 24"><use href="#grid"/><path fill="#777" d="M0 3h24v4H0z"/><path fill="#d91e2a" stroke="#8e0e16" d="M11.500 17.500h12v4h-12z"/></svg></button>
    <span class="vr-t"></span>
    <button class="tb" aria-label="Zelle markieren"><svg viewBox="0 0 24 24"><use href="#grid"/><path fill="#8db8ea" stroke="#2f66a8" stroke-width="1.500" d="M6.500 7h10v6h-10z"/></svg></button>
    <button class="tb" aria-label="Tabelle markieren"><svg viewBox="0 0 24 24"><path fill="#9cc0ec" stroke="#2f66a8" stroke-width="1.500" d="M1.500 2.500h21v20h-21zM1 7.500h21M1 12.500h21M1 17.500h21M6.500 3v19M12 3v19M17.500 3v19"/></svg></button>
    <span class="vr-t"></span>
    <button class="tb off" aria-label="Zellen verbinden"><svg viewBox="0 0 24 24"><use href="#grid"/><path stroke="#777" fill="#ddd" d="M3.500 8h17v8h-17z"/><path fill="#555" d="M5 12l4-3v2h6V9l4 3-4 3v-2H9v2z"/></svg></button>
    <button class="tb" aria-label="Zellen teilen"><svg viewBox="0 0 24 24"><use href="#grid"/><path fill="#8db8ea" d="M10 1h4v22h-4z"/><path fill="#333" d="M3 12l6-5v3h6V7l6 5-6 5v-3H9v3z"/><path fill="#8db8ea" d="M11 8h2v8h-2z"/></svg></button>
    <button class="tb" aria-label="Tabelle teilen"><svg viewBox="0 0 24 24"><use href="#grid"/><path fill="#333" d="M12 1l4 6h-3v10h3l-4 6-4-6h3V7H8z"/><path fill="#8db8ea" d="M1 11h22v2.500H1z"/></svg></button>
    <span class="vr-t"></span>
    <button class="tb off" aria-label="Optimieren"><svg viewBox="0 0 24 24"><use href="#grid"/><path fill="none" stroke="#777" stroke-width="3" d="M12 18l3 4 7-8"/></svg></button><button class="dd off" aria-label="Optimieren Auswahl"></button>
    <span class="vr-t"></span>
    <button class="tb on" aria-label="Oben"><svg viewBox="0 0 24 24"><path fill="url(#gp)" d="M3 3h18v18H3z"/><path stroke="#aaa" d="M0 2.500h24M0 21.500h24M2.500 0v24M21.500 0v24"/><path stroke="#000" stroke-width="2" d="M5 5.500h9M5 9.500h5"/><path fill="none" stroke="#2c5a96" stroke-width="1.300" d="M17.500 19V5M15.500 8l2-3 2 3"/></svg></button>
    <button class="tb" aria-label="Mitte"><svg viewBox="0 0 24 24"><path fill="url(#gp)" d="M3 3h18v18H3z"/><path stroke="#aaa" d="M0 2.500h24M0 21.500h24M2.500 0v24M21.500 0v24"/><path stroke="#000" stroke-width="2" d="M5 10.500h9M5 14.500h5"/><path fill="none" stroke="#2c5a96" stroke-width="1.300" d="M17.500 19V5M15.500 8l2-3 2 3M15.500 16l2 3 2-3"/></svg></button>
    <button class="tb" aria-label="Unten"><svg viewBox="0 0 24 24"><path fill="url(#gp)" d="M3 3h18v18H3z"/><path stroke="#aaa" d="M0 2.500h24M0 21.500h24M2.500 0v24M21.500 0v24"/><path stroke="#000" stroke-width="2" d="M5 14.500h5M5 18.500h9"/><path fill="none" stroke="#2c5a96" stroke-width="1.300" d="M17.500 19V5M15.500 16l2 3 2-3"/></svg></button>
    <span class="vr-t"></span>
    <button class="tb" aria-label="Hintergrundfarbe"><svg viewBox="0 0 24 24"><rect x="2.500" y="-.5" width="19" height="16" rx="1" fill="#e4eefa" stroke="#3a6db8" stroke-width="1.500"/><path stroke="#333" stroke-width="2" d="M5 4.500h14M5 10.500h14"/><path fill="#ff0" d="M0 18h24v6H0z"/></svg></button><button class="dd" aria-label="Hintergrundfarbe Auswahl"></button>
    <button class="tb" aria-label="Autoformat"><svg viewBox="0 0 24 24"><path fill="#eee" stroke="#888" d="M2.500 .5h19v22h-19z"/><path fill="#3a6db8" d="M2 0h20v4H2z"/><path stroke="#777" d="M5 8.500h10M5 11.500h8M5 14.500h6M5 17.500h6"/><path stroke="#666" stroke-width="2" d="M16 15l7 9"/><circle cx="16" cy="15" r="3.500" fill="#f8ee6a"/></svg></button>
    <span class="vr-t"></span>
    <button class="tb" aria-label="Umrandung"><svg viewBox="0 0 24 24"><path fill="url(#gp)" stroke="#888" d="M2.500 2.500h18v19h-18z"/><path stroke="#999" stroke-dasharray="2 1" d="M3 12h9M12 3v9"/><path stroke="#5a8cc8" d="M12 12h9M12 12v10"/></svg></button><button class="dd" aria-label="Umrandung Auswahl"></button>
    <button class="tb" aria-label="Umrandungsstil"><svg viewBox="0 0 24 24"><path fill="none" stroke="#25487c" stroke-width="2" d="M2 24V0h22"/><path fill="none" stroke="#333" stroke-dasharray="3 1" d="M9.500 24V9.500H23"/><path fill="none" stroke="#222" stroke-width="1.500" d="M16 24v-8h7"/></svg></button><button class="dd" aria-label="Umrandungsstil Auswahl"></button>
    <button class="tb" aria-label="Umrandungsfarbe"><svg viewBox="0 0 24 24"><path fill="#f5f5f5" stroke="#222" stroke-width="3" d="M4 1h16v13H4z"/><path fill="#000080" d="M0 18h24v6H0z"/></svg></button><button class="dd" aria-label="Umrandungsfarbe Auswahl"></button>
    <span class="vr-t"></span>
    <button class="tb" aria-label="Währung"><svg viewBox="0 0 24 24"><text x="12" y="18" text-anchor="middle" font-size="19" font-weight="700" fill="#222">$</text></svg></button>
    <button class="tb" aria-label="Prozent"><svg viewBox="0 0 24 24"><text x="12" y="20" text-anchor="middle" font-size="25" font-weight="500" fill="#444">%</text></svg></button>
    <button class="tb" aria-label="Zahl"><svg viewBox="0 0 24 24"><text x="12" y="16" text-anchor="middle" font-size="15" font-weight="700" fill="#333">0.0</text></svg></button>
    <button class="tb" aria-label="Zahlenformat"><svg viewBox="0 0 24 24"><path fill="#eee" stroke="#777" d="M2.500 2.500h19v19h-19z"/><path fill="#3a6db8" d="M2 2h20v4H2z"/><text x="12" y="18" text-anchor="middle" font-size="10" font-weight="700" fill="#222">#.#</text></svg></button>
    <span class="vr-t"></span>
    <button class="tb" aria-label="Beschriftung"><svg viewBox="0 0 24 24"><path fill="#fff" stroke="#222" stroke-dasharray="2 1" d="M3.500 .5h18v14h-18z"/><text x="3" y="24" font-size="8" font-weight="700">ABC</text><path fill="#25487c" d="M0 18l3 3-3 3z"/></svg></button>
    <button class="tb off" aria-label="Sortieren"><svg viewBox="0 0 24 24" fill="none" stroke="#999"><circle cx="4" cy="3" r="2"/><circle cx="4" cy="9" r="2"/><circle cx="4" cy="15" r="2"/><circle cx="4" cy="21" r="2"/><path stroke-width="2" d="M14 4v12M18 4v12M10 15l6 7 6-7"/></svg></button>
    <span class="vr-t"></span>
    <button class="tb" aria-label="Zellen schützen"><svg viewBox="0 0 24 24"><path fill="#fff" stroke="#888" d="M.5 .5h21v22H.5zM.5 5h21M.5 9.500h21M.5 14h21M.5 18h21M6 1v21M11 1v21M16 1v21"/><path fill="none" stroke="#888" stroke-width="2" d="M13 14v-3a4 4 0 0 1 7 0v3"/><path fill="#f2d21c" stroke="#a88a0a" d="M10.500 14.500h12v9h-12z"/></svg></button>
    <button class="tb off" aria-label="Schutz aufheben"><svg viewBox="0 0 24 24"><path fill="#fff" stroke="#888" d="M.5 .5h21v22H.5zM.5 5h21M.5 9.500h21M.5 14h21M.5 18h21M6 1v21M11 1v21M16 1v21"/><path stroke="#888" stroke-width="4" d="M22 8L10 22"/></svg></button>
    <span class="vr-t"></span>
    <button class="tb" aria-label="Summe"><svg viewBox="0 0 24 24"><path fill="#444" d="M3 0h18v6h-2l-1-3H9l7 8-8 9h11l1-3h2l-1 7H3v-2l8-10-8-9z"/></svg></button>
    <button class="tb" aria-label="Formel"><svg viewBox="0 0 24 24"><text x="10" y="21" text-anchor="middle" font-size="18" font-weight="700" font-style="italic" fill="#6c3483">fx</text><g fill="#f5c518"><circle cx="4" cy="4" r="2"/><circle cx="13" cy="2" r="2.500"/><circle cx="21" cy="4" r="2.500"/></g></svg></button>
    <span class="vr-t"></span>
    <button class="tb" aria-label="Tabelleneigenschaften"><svg viewBox="0 0 24 24"><use href="#grid"/><path fill="#777" d="M0 3h24v4H0z"/><path stroke="#999" stroke-width="3.500" d="M16 16l6 7"/><path fill="none" stroke="#888" stroke-width="2" d="M11 12l1 4 4 1 2-3-1-4"/></svg></button>
  </div>
  <div class="toolrow d-flex align-items-center" role="toolbar" aria-label="Zeichnen">
    <span class="grip"></span>
    <button class="tb" aria-label="Auswahl"><svg viewBox="0 0 24 24"><path fill="#fff" stroke="#888" d="M7 1v17l4-4 3 7 3-1-3-7h5z"/></svg></button>
    <span class="vr-t"></span>
    <button class="tb" aria-label="Linie"><svg viewBox="0 0 24 24"><path stroke="#000" stroke-width="1.300" d="M3 21L21 2"/></svg></button>
    <button class="tb" aria-label="Freihandlinie"><svg viewBox="0 0 24 24"><path stroke="#e08a30" stroke-width="5" d="M18 4L8 17"/><path stroke="#d8727a" stroke-width="5" d="M20 2l-2 2"/><path fill="#f2cf9c" d="M6 15l5 4-7 3z"/></svg></button>
    <button class="tb" aria-label="Kurve"><svg viewBox="0 0 24 24" fill="none" stroke="#333" stroke-width="1.300"><path d="M2 4h20M3 22c0-10 3-16 9-18 6 2 9 8 9 18"/><path fill="#fff" d="M0 2.500h3v3H0zM10.500 2.500h3v3h-3zM21 2.500h3v3h-3z"/><path fill="#000" d="M1.500 17h3v3h-3zM19.500 17h3v3h-3z"/></svg></button>
    <button class="tb" aria-label="Polygon"><svg viewBox="0 0 24 24" fill="none" stroke="#3a6490"><path d="M4.500 2.500h6l-2 12h4l0-4 10-1-2 12-17-3z"/><path fill="#fff" stroke="#000" d="M3.500 1.500h2v2h-2zM9.500 1.500h2v2h-2zM11.500 9.500h2v2h-2zM21.500 8.500h2v2h-2zM19.500 20.500h2v2h-2zM2.500 17.500h2v2h-2z"/></svg></button>
    <span class="vr-t"></span>
    <button class="tb" aria-label="Rechteck"><svg viewBox="0 0 24 24"><path fill="url(#gb)" stroke="#2f5f9f" d="M1.500 4.500h21v14h-21z"/></svg></button>
    <button class="tb" aria-label="Abgerundetes Rechteck"><svg viewBox="0 0 24 24"><rect x="1.500" y="4.500" width="21" height="14" rx="4" fill="url(#gb)" stroke="#2f5f9f"/></svg></button>
    <button class="tb" aria-label="Quadrat"><svg viewBox="0 0 24 24"><path fill="url(#gb)" stroke="#2f5f9f" d="M1.500 1.500h21v21h-21z"/></svg></button>
    <button class="tb" aria-label="Ellipse"><svg viewBox="0 0 24 24"><ellipse cx="12" cy="11.500" rx="10.500" ry="8" fill="url(#gb)" stroke="#2f5f9f"/></svg></button>
    <button class="tb" aria-label="Kreis"><svg viewBox="0 0 24 24"><circle cx="12" cy="12" r="10.500" fill="url(#gb)" stroke="#2f5f9f"/></svg></button>
    <button class="tb" aria-label="Dreieck"><svg viewBox="0 0 24 24"><path fill="url(#gb)" stroke="#2f5f9f" d="M12 2l10.500 19.500h-21z"/></svg></button>
    <button class="tb" aria-label="Rechtwinkliges Dreieck"><svg viewBox="0 0 24 24"><path fill="url(#gb)" stroke="#2f5f9f" d="M3.500 3v18.500h18z"/></svg></button>
    <span class="vr-t"></span>
    <button class="tb" aria-label="Raute"><svg viewBox="0 0 24 24"><path fill="url(#gb)" stroke="#2f5f9f" d="M12 1l11 11-11 11L1 12z"/></svg></button><button class="dd" aria-label="Raute Auswahl"></button>
    <button class="tb" aria-label="Symbolformen"><svg viewBox="0 0 24 24"><circle cx="12" cy="12" r="10.500" fill="url(#gb)" stroke="#2f5f9f"/><circle cx="8" cy="8" r="1.500" fill="#1d3f73"/><circle cx="16" cy="8" r="1.500" fill="#1d3f73"/><path fill="none" stroke="#1d3f73" stroke-width="1.300" d="M5 14c3 6 11 6 14 0"/></svg></button><button class="dd" aria-label="Symbolformen Auswahl"></button>
    <button class="tb" aria-label="Blockpfeile"><svg viewBox="0 0 24 24"><path fill="url(#gb)" stroke="#2f5f9f" d="M1.500 12L8 6v4h8V6l6.500 6L16 18v-4H8v4z"/></svg></button><button class="dd" aria-label="Blockpfeile Auswahl"></button>
    <button class="tb" aria-label="Sterne"><svg viewBox="0 0 24 24"><path fill="url(#gb)" stroke="#2f5f9f" d="M12 1l3 8h8l-6 5 2 8.500-7-5-7 5L7 14 1 9h8z"/></svg></button><button class="dd" aria-label="Sterne Auswahl"></button>
    <button class="tb" aria-label="Legenden"><svg viewBox="0 0 24 24"><path fill="url(#gb)" stroke="#2f5f9f" d="M3 1.500h18q2 0 2 2v11q0 2-2 2h-8l-7 6 2-6H3q-2 0-2-2v-11q0-2 2-2z"/></svg></button><button class="dd" aria-label="Legenden Auswahl"></button>
    <button class="tb" aria-label="Flussdiagramm"><svg viewBox="0 0 24 24"><path fill="url(#gb)" stroke="#2f5f9f" d="M1.500 1.500h21v21h-21zM7.500 1.500v21M1.500 7.500h21"/></svg></button><button class="dd" aria-label="Flussdiagramm Auswahl"></button>
    <span class="vr-t"></span>
    <button class="tb" aria-label="Legende"><svg viewBox="0 0 24 24"><path fill="#f4f4f4" stroke="#444" stroke-width="1.300" d="M2 21l3-4C-1 11 2 3 12 3c14 0 14 16 0 16-2 0-4 0-5-1z"/><path stroke="#999" d="M7 8h10M7 11h10M7 14h7"/></svg></button>
    <button class="tb" aria-label="Vertikale Legende"><svg viewBox="0 0 24 24"><path fill="#f4f4f4" stroke="#444" stroke-width="1.300" d="M3 22l3-4C3 10 5 1 12 1c11 0 11 21 0 21-2 0-3-1-4-2z"/><path stroke="#999" d="M9 6v10M12 6v11M15 6v10"/></svg></button>
    <span class="vr-t"></span>
    <button class="tb" aria-label="Textfeld"><svg viewBox="0 0 24 24"><path fill="#fff" stroke="#000" stroke-dasharray="2 1.500" d="M1 1h22v22H1z"/><path fill="#444" d="M5 4h14v6h-2l-1-3h-2v11l2 1v1H8v-1l2-1V7H8l-1 3H5z"/></svg></button>
    <button class="tb" aria-label="Vertikaler Text"><svg viewBox="0 0 24 24"><path fill="#888" stroke="#333" d="M1.500 6v10h3v-3h12v4h-2l1 3h6V2h-6l-1 3h2v4H5V6z"/></svg></button>
    <button class="tb" aria-label="Fontwork"><svg viewBox="0 0 24 24"><path fill="none" stroke="#444" d="M8 4l4-4 4 4"/><rect x="1.500" y="5.500" width="21" height="15" rx="1" fill="#f6f6f6" stroke="#c07a1c" stroke-width="2.500"/><text x="12" y="17" text-anchor="middle" font-size="10" font-weight="700" fill="#5b2f7a">A</text></svg></button>
    <span class="vr-t"></span>
    <button class="tb off" aria-label="Punkte bearbeiten"><svg viewBox="0 0 24 24" fill="none" stroke="#555" stroke-width="1.300"><path d="M4 3l10-2 7 7-3 14-14-1 4-8z" stroke-dasharray="4 2"/><circle cx="4" cy="3" r="1.500"/><circle cx="14" cy="1" r="1.500"/><circle cx="21" cy="8" r="1.500"/><circle cx="18" cy="22" r="1.500"/><circle cx="4" cy="21" r="1.500"/><circle cx="8" cy="13" r="1.500"/></svg></button>
    <button class="tb off" aria-label="Extrusion"><svg viewBox="0 0 24 24"><path fill="#bbb" stroke="#888" d="M6 6l4-4h13v17l-3 3H6z"/><path fill="#fff" stroke="#888" d="M1 14h6v-3l5 5-5 5v-3H1z"/></svg></button>
  </div>
</div>

<footer class="status d-flex align-items-center">
  <div style="width:259px">Seite 1 von 1</div>
  <div style="width:374px">67 Wörter, 535 Zeichen</div>
  <div style="width:237px">Standard</div>
  <div class="text-center ps-0" style="width:310px">Deutsch (Deutschland)</div>
  <div style="width:68px"></div>
  <div style="width:30px"><svg width="14" height="12" viewBox="0 0 14 12"><path fill="#777" d="M0 3h9v6H0z"/><path stroke="#777" d="M11.500 1v10M10 1.500h3M10 10.500h3"/></svg></div>
  <div style="width:28px"><svg width="14" height="12" viewBox="0 0 14 12"><path fill="none" stroke="#999" d="M.5 .5h8v10h-8z"/><path stroke="#c0202a" stroke-width="1.500" d="M9 3v6M6.500 4.500l5 3M11.500 4.500l-5 3"/></svg></div>
  <div style="width:29px"></div>
  <div class="text-center ps-0 flex-shrink-1 flex-grow-1">Tabelle1:E5</div>
  <div style="width:76px" class="d-flex align-items-center"><svg width="60" height="12" viewBox="0 0 60 12" fill="none" stroke="#777"><path d="M3.500 1.500h5l2 2v7h-7z"/><path stroke="#333" d="M17.500 1.500h5l2 2v7h-7zM27.500 1.500h5l2 2v7h-7z"/><path d="M48.500 10.500h-7v-7l2-2h5zM48.500 1.500h5l2 2v7h-7z"/></svg></div>
  <div style="width:143px" class="d-flex align-items-center justify-content-between pe-2"><button aria-label="Verkleinern"><svg width="8" height="8" class="d-block"><path fill="#888" d="M0 3h8v2H0z"/></svg></button><input class="zoomr" type="range" aria-label="Zoom" min="0" max="100" value="50"><button aria-label="Vergrößern"><svg width="8" height="8" class="d-block"><path fill="#888" d="M0 3h8v2H0zM3 0h2v8H3z"/></svg></button></div>
  <div class="border-0 ps-2" style="width:47px">100 %</div>
</footer>

<div class="task d-flex">
  <div class="ghost">6. Wiederholen Sie die letzten beiden Arbeitsschritte für jede Umrandungsseite.<br>7. Geben Sie im Bereich <b>Abstand zum Inhalt</b> den gewünschten Abstand zwischen Umrandungslinien und Seiteninhalt an</div>
  <div class="stripes"></div>
  <button class="tk tk-start" aria-label="Start"><svg viewBox="0 0 34 32"><path fill="#fff" d="M4 7l11-2v10H4zM16 5l14-2v12H16zM4 16h11v10L4 24zM16 16h14v12l-14-2z"/></svg></button>
  <button class="tk open" aria-label="Explorer"><svg viewBox="0 0 34 32"><path fill="#e9c85a" stroke="#b8952c" d="M3 5h10l2-3h14v5h2v21H3z"/><path fill="#fbe793" d="M3 9h28v20H3z"/><path fill="#4aa84a" d="M6 2h5v4H6z"/><path fill="#d04a3a" d="M17 3h8v3h-8z"/><path fill="none" stroke="#8cd0f0" stroke-width="5" d="M9 32V22h16v10"/></svg></button>
  <button class="tk open" aria-label="Chrome"><svg viewBox="0 0 34 32"><circle cx="17" cy="16" r="15" fill="#fbc116"/><path fill="#e33b2e" d="M4 8.500a15 15 0 0 1 26 0H17l-6 11z"/><path fill="#2da94f" d="M4 8.500l7 12.500 6 3-3 6.700A15 15 0 0 1 4 8.500z"/><circle cx="17" cy="16" r="7" fill="#fff"/><circle cx="17" cy="16" r="5.500" fill="#3b7de0"/></svg></button>
  <button class="tk" aria-label="Anwendung"><svg viewBox="0 0 34 32"><rect x="1" y="1" width="32" height="30" rx="2" fill="#1555b4" stroke="#0c2f6c"/><path fill="#f8c838" stroke="#b8860b" d="M13 3h8v5l-4 4-4-4zM13 29h8v-5l-4-4-4 4zM6 12v8h4l4-4-4-4zM28 12v8h-4l-4-4 4-4z"/></svg></button>
  <button class="tk" aria-label="Word"><svg viewBox="0 0 34 32"><path fill="#fff" stroke="#7fa6dc" d="M9 1h22v28H3V6z"/><path fill="none" stroke="#1d56b0" stroke-width="4" d="M5 7l4 14 4-12 4 12 5-15"/><path fill="#eef" stroke="#3a6db8" d="M17 20l16-4v14H19z"/><path stroke="#7fa6dc" d="M21 22l9-2M21 25l9-2"/></svg></button>
  <button class="tk" aria-label="PowerPoint"><svg viewBox="0 0 34 32"><path fill="#fff" stroke="#e08a60" d="M9 1h22v28H3V6z"/><path fill="none" stroke="#d8501c" stroke-width="4" d="M8 24V7h6q5 0 5 5t-5 5H9"/><path fill="#fff" stroke="#d8592a" d="M17 18l15-3v15H19z"/><circle cx="25" cy="22" r="5" fill="#e4682e"/></svg></button>
  <button class="tk" aria-label="Rechner"><svg viewBox="0 0 34 32"><path fill="#008a0c" d="M2 1h30v30H2z"/><path fill="#fff" d="M9 5h16v22H9z"/><path fill="#008a0c" d="M11 8h12v4H11zM11 14h3v3h-3zM15.500 14h3v3h-3zM20 14h3v3h-3zM11 18h3v3h-3zM15.500 18h3v3h-3zM20 18h3v3h-3zM11 22h3v3h-3zM15.500 22h3v3h-3zM20 22h3v3h-3z"/></svg></button>
  <button class="tk open" aria-label="Monitor"><svg viewBox="0 0 34 32"><path fill="#bbb" stroke="#888" d="M3 8l8-3v20l-6-3z"/><path fill="#eef4fb" stroke="#999" d="M10 4l22 2v14l-22 2z"/><path fill="none" stroke="#3a86c8" stroke-width="1.500" d="M12 16l3-4 3 4 3-8 3 10 3-6 4 3"/><path fill="#ccc" stroke="#999" d="M14 23l12-1 4 7-16 1z"/></svg></button>
  <button class="tk open" aria-label="Calc"><svg viewBox="0 0 34 32"><path fill="#fff" stroke="#188a24" stroke-width="2.500" d="M5 1h14l9 9v21H5z"/><path fill="#188a24" d="M20 0h9v9z"/><path fill="#d9f2d4" stroke="#188a24" d="M8.500 13.500h16v12h-16zM8.500 17.500h16M8.500 21.500h16M14 13.500v12M19 13.500v12"/></svg></button>
  <button class="tk open act" aria-label="Writer"><svg viewBox="0 0 34 32"><path fill="#fff" stroke="#145a8c" stroke-width="2.500" d="M5 1h14l9 9v21H5z"/><path fill="#145a8c" d="M20 0h9v9z"/><path stroke="#145a8c" stroke-width="2" d="M9 13h6M9 17h6M9 21h15M9 25h10"/><path fill="#4aa0d8" stroke="#145a8c" d="M17 12h7v6h-7z"/></svg></button>
  <button class="tk open" aria-label="Excel"><svg viewBox="0 0 34 32"><path fill="#fff" stroke="#6ab87a" d="M9 1h22v28H3V6z"/><path stroke="#1f7f38" stroke-width="4" d="M7 6l12 18M19 6L6 24"/><path fill="#fff" stroke="#2a8a3c" d="M19 16h13v14H19zM19 21h13M19 25h13M26 16v14"/></svg></button>
  <button class="tk open" aria-label="Paint"><svg viewBox="0 0 34 32"><path fill="#bcdcf2" stroke="#6b9cc0" d="M15 5c18-4 18 22 4 25-5 1-3-6-7-6C-2 26-1 9 15 5z"/><circle cx="10" cy="12" r="3" fill="#4ab04a"/><circle cx="18" cy="10" r="3" fill="#f0c030"/><circle cx="8" cy="18" r="2.500" fill="#d8323a"/><circle cx="16" cy="19" r="2.500" fill="#7a8ca0"/><path stroke="#e08a30" stroke-width="3" d="M28 4l-6 26"/><circle cx="29" cy="3" r="3" fill="#a87848"/></svg></button>
  <div class="tray ms-auto d-flex align-items-center position-relative">
    <svg viewBox="0 0 18 18"><rect x="1" y="1" width="16" height="16" rx="2" fill="#1d8fdc"/><path fill="none" stroke="#fff" d="M3.500 3.500h5v5h-5zM10 4h5M10 8h5M4 12h4M10 11.500h5v3h-5z"/></svg>
    <svg viewBox="0 0 18 18"><path fill="#7d7078" stroke="#ddd" d="M3.500 3.500h11v12h-11z"/></svg>
    <svg viewBox="0 0 18 18"><path fill="#111" d="M4 2c6 0 11 4 13 10l-4 2c-4-1-8-6-9-12z"/><path fill="#ddd" stroke="#222" d="M3 3l4 6 4 4-3 4-4-1-2-4z"/></svg>
    <svg viewBox="0 0 18 18"><rect x="1" y="1" width="16" height="16" rx="2" fill="#d8101c"/><path fill="none" stroke="#fff" stroke-width="2" d="M4 10c0-7 9-8 10-1zM9 9l-3 5M10 9l1 4"/></svg>
    <svg viewBox="0 0 18 18"><circle cx="9" cy="9" r="8" fill="#2a70b8"/><path fill="#4cc08a" d="M5 3l6-1 2 4-3 2-1 6-4-4-3-2zM12 10l4-1-2 5z"/></svg>
    <svg viewBox="0 0 18 18"><rect x="1" y="5" width="16" height="8" rx="2" fill="#ddd"/><path fill="none" stroke="#3fae2c" stroke-width="3" d="M7 12l3 4 6-8"/></svg>
    <svg viewBox="0 0 18 18"><path fill="#ddd" d="M3 1h5v4H3z"/><path fill="#555" d="M2 5h7v11H2z"/><circle cx="13" cy="12" r="5" fill="#2fa02c"/><path fill="none" stroke="#fff" stroke-width="1.500" d="M10.500 12l2 2 3-4"/></svg>
    <svg viewBox="0 0 18 18"><path fill="#3c0a08" stroke="#d0402c" stroke-width="1.500" d="M1 1h16v16H1z"/><path fill="none" stroke="#fff" stroke-width="1.300" d="M3 15c3-2 5-6 5-11 1 5 3 7 7 7-4-1-8 0-12 4"/></svg>
    <svg viewBox="0 0 18 18"><path fill="#fff" d="M1 3l7-1v6H1zM9 2l8-1v7H9zM1 9h7v7l-7-1zM9 9h8v8l-8-1z"/></svg>
    <svg viewBox="0 0 18 18"><path fill="#fff" d="M2 1h1.500v16H2zM5 3h5v2h6l-2 3 1 3H9V9H5z"/></svg>
    <svg viewBox="0 0 18 18" fill="none" stroke="#fff" stroke-width="1.500"><path d="M7 4h9v8H7zM8 16h7M11.500 12v4M2 2h4v5H2zM4 7v8h4"/></svg>
    <svg viewBox="0 0 18 18"><path fill="#fff" d="M1 6h3l5-5v16l-5-5H1z"/><circle cx="13" cy="12" r="4.500" fill="#e03a30"/><path stroke="#fff" stroke-width="1.500" d="M10 9.500l6 5"/></svg>
    <div class="clock text-center text-white">13:35<br>30.05.2016</div>
  </div>
</div>

<script src="https://cdn.jsdelivr.net/npm/bootstrap@5.3.0/dist/js/bootstrap.bundle.min.js"></script>
<script>
// Rulers: one centimetre is 37.77 px at 100 % zoom.
const CM = 37.77;
const seg = (d, s = '#777') => `<path fill="none" stroke="${s}" d="${d}"/>`;
let h = '<rect x="31" y="4" width="1066" height="15" fill="#fff"/><path fill="#efefef" stroke="#999" d="M.5 4.500h31v14H.5zM1097.500 4.500h25v14h-25z"/>';
for (let i = 1; i <= 28; i++) {
  const x = Math.round(31.500 + i * CM);
  h += `<text x="${x}" y="15" text-anchor="middle" font-size="9" fill="#666">${i}</text>` + seg(`M${x + .5} 4v2M${x + .5} 17v2`, '#888');
}
for (let i = -1; i <= 28; i++) h += seg(`M${Math.round(31.500 + (i + .5) * CM) + .5} 9v4`);
h += '<path fill="#ddd" stroke="#555" d="M27.500 3.500h8v3l-4 4-4-4zM27.500 18.500h8v-3l-4-4-4 4zM155.500 18.500h8v-3l-4-4-4 4z"/>';
h += seg('M158.500 4v8M161.500 4v8M669.500 4v15M671.500 4v15', '#888') + seg('M55.500 18.500h5M58.500 16v3M82.500 18.500h5M85.500 16v3M110.500 18.500h5M113.500 16v3M137.500 18.500h5M140.500 16v3', '#555');
document.getElementById('hruler').innerHTML = h;

let v = '<path fill="#666" d="M8 9h2v4h5v2H8z"/><rect x="4" y="120" width="15" height="696" fill="#fff"/><path fill="#efefef" stroke="#999" d="M4.500 43.500h14v76h-14z"/>';
const num = (y, n) => `<text transform="translate(15 ${y}) rotate(-90)" text-anchor="middle" font-size="9" fill="#666">${n}</text>` + seg(`M4 ${y + .5}h2M17 ${y + .5}h2`, '#888');
v += num(81, 1) + seg('M9 62.500h4M9 100.500h4');
for (let i = 1; i <= 18; i++) v += num(Math.round(119.500 + i * CM), i);
for (let i = 0; i < 18; i++) if (i !== 1 && i !== 3) v += seg(`M9 ${Math.round(119.500 + (i + .5) * CM) + .5}h4`);
for (const y of [175, 251, 277, 331, 456]) v += seg(`M4 ${y + .5}h15M4 ${y + 2.5}h15`, '#888');
document.getElementById('vruler').innerHTML = v;

// Annotations painted over the sheet: class, left, top, width, height in sheet coordinates.
const marks = [
  ['logo-bit',894,80,17,2],['logo-bit',916,80,17,2],['logo-bit',938,80,26,2],
  ['tick',704,292,15,15],['tick',704,310,15,13],['tick',704,326,15,13],['tick',704,341,15,13],['tick',704,372,15,13],
  ['hide-box',25,61,13,15],['hide-box',31,81,127,73],['hide-box',345,95,153,20],['hide-box open-r',233,153,413,38],
  ['hide-box',44,238,620,41],['hide-box',694,81,321,113],['hide-box',695,241,128,20],['hide-box',862,241,144,21],
  ['hide-box',1026,240,63,36],['hide-box',706,295,150,102],['hide-box',867,293,123,88],
  ['red-box',645,55,74,394],['yel-box',680,67,26,153],['yel-box',678,224,26,201]
];
document.getElementById('marks').innerHTML = marks.map(([c, x, y, w, t]) =>
  `<div class="${c}" style="left:${x}px;top:${y}px;width:${w}px;height:${t}px"></div>`).join('') + '<div class="drag-line"></div>';
</script>
</body>
</html>
